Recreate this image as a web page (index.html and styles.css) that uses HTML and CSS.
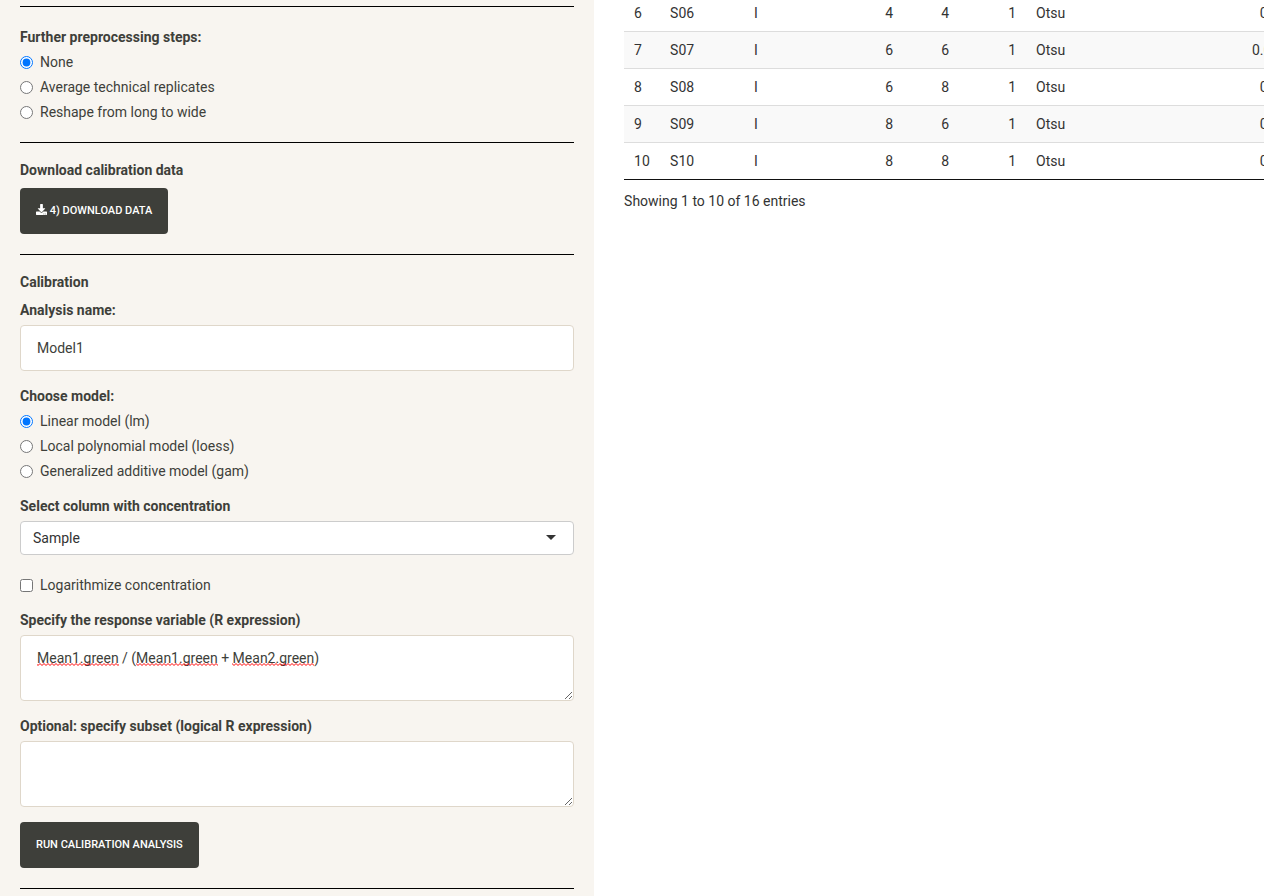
FILE: index.html
```html
<!DOCTYPE html>
<html lang="en">
<head>
<meta charset="utf-8">
<title>Calibration</title>
<link rel="stylesheet" href="styles.css">
</head>
<body>
<div class="layout">
  <form class="sidebar">
    <section class="panel panel-first">
      <fieldset class="group">
        <legend class="label">Further preprocessing steps:</legend>
        <label class="option"><input type="radio" name="prep" checked><span>None</span></label>
        <label class="option"><input type="radio" name="prep"><span>Average technical replicates</span></label>
        <label class="option"><input type="radio" name="prep"><span>Reshape from long to wide</span></label>
      </fieldset>
    </section>

    <section class="panel">
      <h5 class="title">Download calibration data</h5>
      <button type="button" class="btn">
        <svg class="btn-icon" viewBox="0 0 512 512" aria-hidden="true"><path fill="currentColor" d="M216 0h80c13.300 0 24 10.700 24 24v168h87.700c17.800 0 26.700 21.500 14.100 34.100L269.700 378.300c-7.500 7.500-19.800 7.500-27.300 0L90.100 226.100c-12.600-12.600-3.700-34.100 14.100-34.100H192V24c0-13.300 10.700-24 24-24zm296 376v112c0 13.300-10.700 24-24 24H24c-13.300 0-24-10.700-24-24V376c0-13.300 10.700-24 24-24h146.700l49 49c20.100 20.100 52.500 20.100 72.600 0l49-49H488c13.300 0 24 10.700 24 24zm-124 88c0-11-9-20-20-20s-20 9-20 20 9 20 20 20 20-9 20-20zm64 0c0-11-9-20-20-20s-20 9-20 20 9 20 20 20 20-9 20-20z"/></svg>
        4) Download data
      </button>
    </section>

    <section class="panel">
      <h5 class="title">Calibration</h5>
      <div class="group">
        <label class="label" for="name">Analysis name:</label>
        <input class="field" id="name" type="text" value="Model1">
      </div>
      <fieldset class="group">
        <legend class="label">Choose model:</legend>
        <label class="option"><input type="radio" name="model" checked><span>Linear model (lm)</span></label>
        <label class="option"><input type="radio" name="model"><span>Local polynomial model (loess)</span></label>
        <label class="option"><input type="radio" name="model"><span>Generalized additive model (gam)</span></label>
      </fieldset>
      <div class="group">
        <label class="label" for="column">Select column with concentration</label>
        <div class="select-wrap">
          <select class="select" id="column"><option>Sample</option></select>
        </div>
      </div>
      <div class="group group-check">
        <label class="option"><input type="checkbox"><span>Logarithmize concentration</span></label>
      </div>
      <div class="group">
        <label class="label" for="response">Specify the response variable (R expression)</label>
        <div class="area-wrap">
          <textarea class="field area" id="response">Mean1.green / (Mean1.green + Mean2.green)</textarea>
          <svg class="spelling" width="280" height="3" aria-hidden="true">
            <defs><pattern id="wave" width="4" height="3" patternUnits="userSpaceOnUse"><path d="M-1 0.500L1 2.500L3 0.500L5 2.500" fill="none" stroke="#f00" stroke-width="1"/></pattern></defs>
            <rect x="0" width="82" height="3" fill="url(#wave)"/>
            <rect x="99" width="82" height="3" fill="url(#wave)"/>
            <rect x="195" width="82" height="3" fill="url(#wave)"/>
          </svg>
        </div>
      </div>
      <div class="group">
        <label class="label" for="subset">Optional: specify subset (logical R expression)</label>
        <textarea class="field area" id="subset"></textarea>
      </div>
      <button type="button" class="btn">Run calibration analysis</button>
    </section>
    <div class="panel"></div>
  </form>

  <main class="main">
    <table class="data">
      <colgroup><col class="c-id"><col class="c-sample"><col class="c-sample"><col class="c-row"><col class="c-narrow"><col class="c-mid"><col class="c-method"><col></colgroup>
      <tbody>
        <tr><td>6</td><td>S06</td><td>I</td><td class="num">4</td><td class="num">4</td><td class="num">1</td><td>Otsu</td><td class="num">0.00</td></tr>
        <tr><td>7</td><td>S07</td><td>I</td><td class="num">6</td><td class="num">6</td><td class="num">1</td><td>Otsu</td><td class="num">0.000</td></tr>
        <tr><td>8</td><td>S08</td><td>I</td><td class="num">6</td><td class="num">8</td><td class="num">1</td><td>Otsu</td><td class="num">0.00</td></tr>
        <tr><td>9</td><td>S09</td><td>I</td><td class="num">8</td><td class="num">6</td><td class="num">1</td><td>Otsu</td><td class="num">0.00</td></tr>
        <tr><td>10</td><td>S10</td><td>I</td><td class="num">8</td><td class="num">8</td><td class="num">1</td><td>Otsu</td><td class="num">0.00</td></tr>
      </tbody>
    </table>
    <p class="info">Showing 1 to 10 of 16 entries</p>
  </main>
</div>
</body>
</html>
```
FILE: styles.css
```css
* { box-sizing: border-box; }

body {
  margin: 0;
  font: 14px/20px Roboto, "Liberation Sans", sans-serif;
  color: #3e3f3a;
  background: #fff;
}

.layout {
  display: flex;
  min-height: 100vh;
}

.sidebar {
  flex: 0 0 47%;
  padding: 6px 20px 0;
  background: #f8f5f0;
}

.panel {
  padding: 17px 0 20px;
  border-top: 1px solid #000;
}

.panel:last-child { padding: 0; }
.panel-first { padding-top: 20px; }
.panel > .group:last-child { margin-bottom: 0; }

.title {
  margin: 0 0 8px;
  font-size: 14px;
  font-weight: 700;
}

.group {
  margin: 0 0 15px;
  padding: 0;
  border: 0;
}

.group-check { padding-top: 5px; }

.label {
  display: block;
  margin: 0 0 5px;
  padding: 0;
  font-weight: 700;
}

.option {
  display: flex;
  align-items: flex-start;
}

.option + .option { margin-top: 5px; }

.option input {
  flex: none;
  width: 13px;
  height: 13px;
  margin: 4px 7px 0 0;
}

.field {
  display: block;
  width: 100%;
  height: 46px;
  padding: 12px 16px;
  border: 1px solid #dfd7ca;
  border-radius: 4px;
  font: inherit;
  color: inherit;
  background: #fff;
}

.area {
  height: 66px;
  resize: vertical;
}

.area-wrap,
.select-wrap { position: relative; }

.spelling {
  position: absolute;
  top: 28px;
  left: 17px;
  pointer-events: none;
}

.select {
  display: block;
  width: 100%;
  height: 34px;
  padding: 6px 12px;
  border: 1px solid #ccc;
  border-radius: 4px;
  appearance: none;
  font: inherit;
  color: #333;
  background: #fff;
}

.select-wrap::after {
  content: "";
  position: absolute;
  top: 14px;
  right: 18px;
  border: 5px solid transparent;
  border-top-color: #333;
  border-bottom-width: 0;
  pointer-events: none;
}

.btn {
  display: block;
  padding: 12px 16px;
  border: 0;
  border-radius: 4px;
  font: 500 11px/22px Roboto, "Liberation Sans", sans-serif;
  text-transform: uppercase;
  color: #fff;
  background: #3e3f3a;
}

.btn-icon {
  width: 11px;
  height: 11px;
  vertical-align: -1px;
}

.main {
  flex: 1;
  min-width: 0;
  padding-left: 30px;
  overflow: hidden;
}

.data {
  width: 673px;
  table-layout: fixed;
  border-collapse: separate;
  border-spacing: 0;
  border-bottom: 1px solid #111;
  color: #333;
}

.c-id { width: 36px; }
.c-sample { width: 84px; }
.c-row { width: 75px; }
.c-narrow { width: 56px; }
.c-mid { width: 67px; }
.c-method { width: 120px; }

.data td {
  padding: 8px 10px;
  border-top: 1px solid #ddd;
}

.data tr:first-child td {
  padding-top: 3px;
  border-top: 0;
}

.data tr:nth-child(even) { background: #f9f9f9; }
.data .num { text-align: right; }

.info {
  margin: 0;
  padding-top: 11px;
  color: #333;
}
```
